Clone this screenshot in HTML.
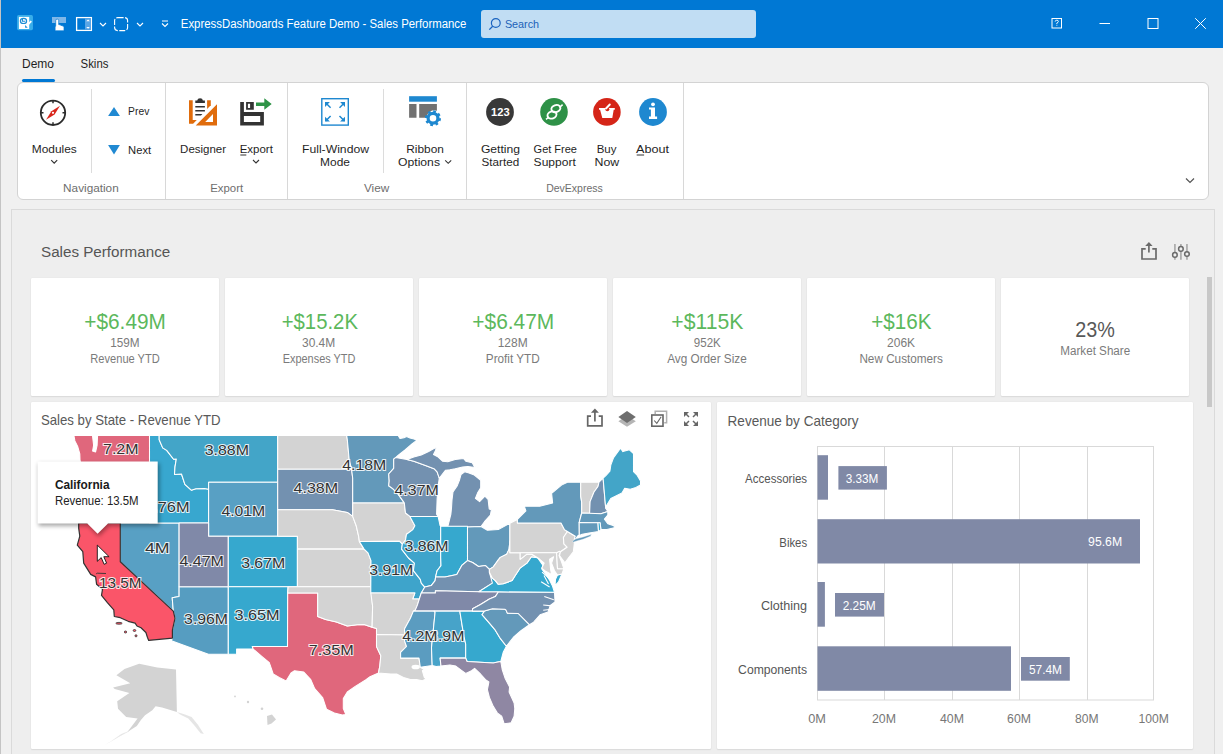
<!DOCTYPE html>
<html><head><meta charset="utf-8">
<style>
*{margin:0;padding:0;box-sizing:border-box}
html,body{width:1223px;height:754px;overflow:hidden;background:#f0f0f0;font-family:"Liberation Sans",sans-serif;position:relative}
.a{position:absolute;white-space:nowrap}
#title{left:0;top:0;width:1223px;height:48px;background:#0078d4}
#wborder{left:0;top:0;width:1px;height:754px;background:#c4c4c4}
.tt{color:#fff;font-size:12px}
#search{left:481px;top:10px;width:275px;height:28px;background:#c1ddf3;border-radius:3px}
.tab{font-size:12px;color:#1e1e1e}
#rib{left:17px;top:82px;width:1192px;height:118px;background:#fff;border:1px solid #d3d3d3;border-radius:6px}
.sep{background:#dcdcdc;width:1px}
.lbl{font-size:12px;color:#222;text-align:center;line-height:13px}
.glbl{font-size:12px;color:#707070}
#dash{left:11px;top:209px;width:1204px;height:560px;background:#eeeeee;border:1px solid #dadada}
.card{background:#fff;border-radius:1px;box-shadow:0 0 1px rgba(0,0,0,0.12),0 1px 1.5px rgba(0,0,0,0.08)}
.kv{font-size:20px;color:#5cb85c}
.ks{font-size:11.5px;color:#7a7a7a}

</style></head><body>
<div id="title" class="a"></div>
<div id="wborder" class="a"></div>
<!-- title bar icons -->
<svg class="a" style="left:0;top:0" width="480" height="48">
  <!-- app icon -->
  <rect x="17.05" y="15.05" width="15.9" height="15.1" rx="1.6" fill="#39aeea"/>
  <rect x="18.9" y="16.9" width="10.3" height="12.1" fill="#fff"/>
  <ellipse cx="23.5" cy="20.9" rx="3.1" ry="2.6" fill="none" stroke="#1b8ed6" stroke-width="1.2"/>
  <path d="M22.5 19v2.3h2.7" stroke="#1b8ed6" stroke-width="1.1" fill="none"/>
  <path d="M26 26.6L31.3 21.1" stroke="#fff" stroke-width="1.7"/>
  <path d="M25.1 25.1V27.7H27.7Z" fill="#1b8ed6"/>
  <!-- touch icon -->
  <rect x="52" y="17" width="14" height="6" fill="#7fb7e8"/>
  <path d="M55.7 26.2V20.6Q55.7 19.1 57.2 19.1Q58.7 19.1 58.7 20.6V24.6L60.2 24.8L61 25.5L62.2 25.5L62.9 26.2L64 26.3V30.8H55.1V26.8Z" fill="#fff" stroke="#0078d4" stroke-width="0.7"/>
  <!-- panel icon -->
  <rect x="76.6" y="17.6" width="14.8" height="12.8" fill="none" stroke="#fff" stroke-width="1.3"/>
  <rect x="85" y="18.2" width="6" height="11.6" fill="#5aa6e6"/>
  <path d="M86.2 21.2L88.1 19.5L89.9 21.2ZM86.2 27.1L88.1 28.8L89.9 27.1Z" fill="#fff"/>
  <path d="M100 23l3 3 3-3" stroke="#fff" stroke-width="1.1" fill="none"/>
  <!-- dashed rounded square -->
  <rect x="114.6" y="17.6" width="13" height="13" rx="3" fill="none" stroke="#fff" stroke-width="1.1" stroke-dasharray="6 1.5"/>
  <path d="M137 23l3 3 3-3" stroke="#fff" stroke-width="1.1" fill="none"/>
  <path d="M162 21h6" stroke="#fff" stroke-width="1"/>
  <path d="M162 23.5l3 3 3-3" stroke="#fff" stroke-width="1.1" fill="none"/>
</svg>
<div id="search" class="a"></div>
<svg class="a" style="left:486px;top:14px" width="20" height="20">
  <circle cx="9.8" cy="9" r="4.4" fill="none" stroke="#1a64c0" stroke-width="1.2"/>
  <path d="M6.7 12.2L3.3 15.6" stroke="#1a64c0" stroke-width="1.3"/>
</svg>
<svg class="a" style="left:1040px;top:10px" width="183" height="30">
  <rect x="12" y="8.5" width="9.5" height="9.5" fill="none" stroke="#fff" stroke-width="1"/>
  <path d="M15.2 11.6q0-1.4 1.6-1.4t1.6 1.3q0 .9-1.6 1.6v.9" fill="none" stroke="#fff" stroke-width="0.9"/>
  <rect x="16.4" y="14.8" width="0.9" height="0.9" fill="#fff"/>
  <path d="M59.5 13.5h10.5" stroke="#fff" stroke-width="1"/>
  <rect x="108" y="8.5" width="10" height="10" fill="none" stroke="#fff" stroke-width="1"/>
  <path d="M155.2 8.2l10.6 10.6M165.8 8.2l-10.6 10.6" stroke="#fff" stroke-width="1"/>
</svg>

<!-- tabs -->
<div class="a" style="left:22px;top:79px;width:33px;height:3px;background:#0078d4;border-radius:2px"></div>

<!-- ribbon -->
<div id="rib" class="a"></div>
<div class="a sep" style="left:165px;top:83px;height:116px;background:#d8d8d8"></div>
<div class="a sep" style="left:287px;top:83px;height:116px;background:#d8d8d8"></div>
<div class="a sep" style="left:466px;top:83px;height:116px;background:#d8d8d8"></div>
<div class="a sep" style="left:683px;top:83px;height:116px;background:#d8d8d8"></div>
<div class="a sep" style="left:91px;top:89px;height:84px"></div>
<div class="a sep" style="left:383px;top:89px;height:84px"></div>

<svg class="a" style="left:0;top:82px" width="1223" height="118" viewBox="0 82 1223 118">
  <!-- compass -->
  <g transform="translate(53,112.8)">
    <circle r="12.2" fill="none" stroke="#2b2b2b" stroke-width="1.8"/>
    <path d="M0-12v2.5M0 12v-2.5M-12 0h2.5M12 0h-2.5" stroke="#2b2b2b" stroke-width="1.5"/>
    <path d="M7-7L1.6 1.6-7 7-1.6-1.6z" fill="#d9261c"/>
    <circle r="1.1" fill="#fff"/>
  </g>
  <path d="M51.2 160.2l3 3 3-3" stroke="#333" stroke-width="1.2" fill="none"/>
  <!-- prev/next -->
  <path d="M108.1 115.9h11.8l-5.9-8.9z" fill="#2089d2"/>
  <path d="M108.1 145h11.8l-5.9 9.5z" fill="#2089d2"/>
  <!-- designer -->
  <path d="M189 100.2H192.7V120H196.8L193.1 123.7H189Z" fill="#e06c0c"/>
  <path d="M207.1 100.2H210.8V105.3L207.1 109Z" fill="#e06c0c"/>
  <path d="M217 104.2V125.5H195.7ZM213 114.1V121.9H205.2Z" fill="#e06c0c" fill-rule="evenodd"/>
  <path d="M195.3 103.1V100.4H197.2Q197.5 98.3 200.1 98.3Q202.6 98.3 202.9 100.4H204.9V103.1Z" fill="#333"/>
  <path d="M195.3 106H204.9V107.5H195.3ZM195.3 110.1H204.9V111.6H195.3ZM195.3 114.1H202.4L201 115.6H195.3Z" fill="#333"/>
  <!-- export floppy -->
  <path d="M240.2 102H243.9V111.9H263.9V125.5H240.2ZM243.9 116V121.9H260.2V116Z" fill="#333" fill-rule="evenodd"/>
  <path d="M246.1 102H253.8V109.7H246.1ZM247.9 103.8V107.9H250.1V103.8Z" fill="#333" fill-rule="evenodd"/>
  <path d="M256 102.4H264.3V98.3L271.7 104L264.3 109.7V105.9H256Z" fill="#2e9447"/>
  <path d="M253 160l3 3 3-3" stroke="#333" stroke-width="1.1" fill="none"/>
  <path d="M240.3 155h6" stroke="#333" stroke-width="1"/>
  <!-- full window -->
  <rect x="321.8" y="98.7" width="26.5" height="26.4" stroke="#1e88d0" stroke-width="1.4" fill="none"/>
  <g stroke="#1e88d0" stroke-width="1.5" fill="none">
    <path d="M325.6 102.7l5 5M344.5 102.7l-5 5M325.6 121l5-5M344.5 121l-5-5"/>
  </g>
  <g fill="#1e88d0">
    <path d="M325 102.1H329.9L325 107Z"/><path d="M345 102.1H340.1L345 107Z"/>
    <path d="M325 121.6H329.9L325 116.7Z"/><path d="M345 121.6H340.1L345 116.7Z"/>
  </g>
  <!-- ribbon options -->
  <rect x="409.1" y="96.2" width="27.8" height="5.5" fill="#1e88d0"/>
  <path d="M409.1 104.1h7.4v13.7h-7.4zM419.2 104.1h17.7v6.6a8.6 8.6 0 0 0-10.8 7.1H419.2z" fill="#717171"/>
  <g transform="translate(433,118.2)">
    <circle r="6.6" fill="none" stroke="#1e88d0" stroke-width="2.8" stroke-dasharray="2.6 2.58"/>
    <circle r="4.9" fill="none" stroke="#1e88d0" stroke-width="3.2"/>
  </g>
  <path d="M445.2 160.3l3 3 3-3" stroke="#333" stroke-width="1.1" fill="none"/>
  <!-- devexpress circles -->
  <circle cx="500" cy="112" r="13.9" fill="#383838"/>
  <text x="491" y="115.8" font-family="Liberation Sans" font-size="10.6" font-weight="bold" fill="#fff" textLength="18.6" lengthAdjust="spacingAndGlyphs">123</text>
  <circle cx="554" cy="111.9" r="13.8" fill="#2e9147"/>
  <g stroke="#fff" stroke-width="1.9" fill="none">
    <ellipse cx="555.9" cy="108.6" rx="4.6" ry="3.5" transform="rotate(-20 555.9 108.6)"/>
    <ellipse cx="552" cy="115" rx="4.6" ry="3.5" transform="rotate(-20 552 115)"/>
  </g>
  <path d="M562.6 104.7L559.5 107.5M546 119.4L549 117" stroke="#fff" stroke-width="1.6"/>
  <circle cx="606.9" cy="111.9" r="13.8" fill="#d52518"/>
  <path d="M599 108H614.8V109.8H613.7L612.3 117.9H602.3L600.1 109.8H599Z" fill="#fff"/>
  <circle cx="607.3" cy="109.3" r="2" fill="#d52518"/>
  <path d="M606 108.5L609.8 104.5" stroke="#fff" stroke-width="1.9" stroke-linecap="round"/>
  <circle cx="653" cy="112" r="13.9" fill="#1e88d0"/>
  <circle cx="653" cy="104.3" r="1.9" fill="#fff"/>
  <path d="M649 107.5H655V116.6H657.1V119H649V116.6H650.9V109.6H649Z" fill="#fff"/>
  <path d="M636.7 155h7.4" stroke="#333" stroke-width="1"/>
  <path d="M1186 178.5l4 4 4-4" stroke="#555" stroke-width="1.2" fill="none"/>
</svg>
<!-- dashboard -->
<div id="dash" class="a"></div>
<svg class="a" style="left:1130px;top:236px" width="70" height="30" viewBox="1130 236 70 30">
  <path d="M1145.7 248.9H1142V259H1156V248.9H1152.3" fill="none" stroke="#6a6a6a" stroke-width="1.7"/>
  <path d="M1148.9 252.6V245" stroke="#6a6a6a" stroke-width="1.7"/>
  <path d="M1148.9 242L1145.2 245.9H1152.6Z" fill="#6a6a6a"/>
  <path d="M1174.9 244V259.8M1180.9 244V259.8M1186.95 244V259.8" stroke="#ababab" stroke-width="1.7"/>
  <g fill="#efefef" stroke="#6a6a6a" stroke-width="1.5">
    <circle cx="1174.9" cy="254.9" r="2.3"/><circle cx="1180.9" cy="248.9" r="2.3"/><circle cx="1186.95" cy="254" r="2.3"/>
  </g>
</svg>
<div class="a" style="left:1207px;top:277px;width:5px;height:130px;background:#c8c8c8"></div>

<!-- KPI cards -->
<div class="a card" style="left:31px;top:278px;width:187.5px;height:118px"></div>
<div class="a card" style="left:225px;top:278px;width:187.5px;height:118px"></div>
<div class="a card" style="left:419px;top:278px;width:187.5px;height:118px"></div>
<div class="a card" style="left:613px;top:278px;width:187.5px;height:118px"></div>
<div class="a card" style="left:807px;top:278px;width:187.5px;height:118px"></div>
<div class="a card" style="left:1001px;top:278px;width:188px;height:118px"></div>

<div id="kpis"></div>

<!-- panels -->
<div class="a card" style="left:31px;top:402px;width:680px;height:347px"></div>
<div class="a card" style="left:717px;top:402px;width:476px;height:347px"></div>

<svg class="a" style="left:717px;top:402px" width="476" height="347" viewBox="717 402 476 347">
<g stroke="#d9d9d9" stroke-width="1" fill="none">
<path d="M884.5 446.5V700M952.5 446.5V700M1019.5 446.5V700M1087.5 446.5V700"/>
<rect x="817.5" y="446.5" width="336" height="253.5"/>
</g>
<g fill="#8089a6">
<rect x="817.5" y="455.2" width="10.5" height="44.5"/>
<rect x="838.4" y="466.1" width="48.5" height="23.5"/>
<rect x="817.5" y="519.2" width="322.5" height="44.3"/>
<rect x="817.5" y="582" width="7.4" height="44.7"/>
<rect x="835" y="593" width="49" height="23.6"/>
<rect x="817.5" y="646.3" width="193.5" height="44.5"/>
<rect x="1021" y="657" width="48.8" height="23.7"/>
</g>
</svg>
<svg class="a" style="left:31px;top:436px" width="680" height="312" viewBox="31 436 680 312">
<path d="M73.6 433.9L74.9 440.9L77.8 446.8L79.8 454.0L80.0 459.8L80.8 464.8L80.8 464.8L86.7 465.5L90.7 466.9L93.0 473.3L100.5 474.7L108.4 473.3L115.3 472.5L125.2 469.4L130.3 468.3L150.7 468.5L149.5 462.3L149.6 424.6L97.6 424.6L97.6 435.0L97.1 445.3L95.6 451.9L92.6 451.1L93.6 445.3L92.1 432.1L91.6 424.6L80.8 424.6Z" fill="#e0677c" stroke="#fff" stroke-width="1.05" stroke-linejoin="round"/>
<path d="M80.8 464.8L80.8 464.8L86.7 465.5L90.7 466.9L93.0 473.3L100.5 474.7L108.4 473.3L115.3 472.5L125.2 469.4L130.3 468.3L150.7 468.5L150.7 468.5L152.8 472.5L154.8 476.1L151.8 483.7L147.9 492.0L150.9 498.9L149.6 500.2L149.6 523.0L78.7 523.0L75.8 512.4L79.8 496.1L81.3 475.4Z" fill="#58a0c4" stroke="#fff" stroke-width="1.05" stroke-linejoin="round"/>
<path d="M120.3 523.0L179.1 523.0L179.1 596.6L172.2 597.8L173.3 611.1L120.3 561.8Z" fill="#58a0c4" stroke="#fff" stroke-width="1.05" stroke-linejoin="round"/>
<path d="M179.1 586.8L228.3 586.8L228.3 654.3L208.4 654.3L171.4 640.7L172.4 638.1L172.4 630.2L175.0 618.3L173.9 613.5L173.3 611.1L172.2 597.8L179.1 596.6Z" fill="#569dc1" stroke="#fff" stroke-width="1.05" stroke-linejoin="round"/>
<path d="M149.5 424.6L159.2 424.6L159.2 439.8L162.7 447.9L166.7 450.4L173.6 459.3L176.3 459.1L175.0 466.9L174.5 474.5L181.5 474.0L184.9 484.4L191.3 490.2L195.8 488.7L204.5 488.6L208.6 489.3L208.6 523.0L149.6 523.0L149.6 500.2L150.9 498.9L147.9 492.0L151.8 483.7L154.8 476.1L152.8 472.5L150.7 468.5L150.7 468.5L149.5 462.3Z" fill="#38a7cf" stroke="#fff" stroke-width="1.05" stroke-linejoin="round"/>
<path d="M159.2 424.6L277.7 424.6L277.7 482.3L208.6 482.3L208.6 489.3L204.5 488.6L195.8 488.7L191.3 490.2L184.9 484.4L181.5 474.0L174.5 474.5L175.0 466.9L176.3 459.1L173.6 459.3L166.7 450.4L162.7 447.9L159.2 439.8Z" fill="#43a5c8" stroke="#fff" stroke-width="1.05" stroke-linejoin="round"/>
<path d="M208.6 482.3L277.7 482.3L277.7 536.2L208.6 536.2Z" fill="#58a0c4" stroke="#fff" stroke-width="1.05" stroke-linejoin="round"/>
<path d="M179.1 523.0L208.6 523.0L208.6 536.2L228.3 536.2L228.3 586.8L179.1 586.8Z" fill="#8089a8" stroke="#fff" stroke-width="1.05" stroke-linejoin="round"/>
<path d="M228.3 536.2L297.4 536.2L297.4 586.8L228.3 586.8Z" fill="#36a8ce" stroke="#fff" stroke-width="1.05" stroke-linejoin="round"/>
<path d="M228.3 586.8L288.1 586.8L287.7 592.9L287.5 646.5L252.3 646.5L253.2 649.1L236.6 649.1L236.6 654.3L228.3 654.3Z" fill="#36a8ce" stroke="#fff" stroke-width="1.05" stroke-linejoin="round"/>
<path d="M287.7 592.9L317.7 592.9L317.7 616.4L325.6 619.5L336.4 621.9L347.3 626.0L357.1 624.8L364.1 624.5L372.1 627.3L376.5 628.4L376.5 646.6L380.8 655.8L379.8 666.1L378.5 672.9L370.0 676.8L366.0 679.6L355.2 686.4L347.3 692.0L343.3 698.6L343.3 708.6L345.8 714.5L342.3 715.1L334.4 712.9L326.5 709.1L322.6 697.5L314.7 688.6L310.8 679.6L303.8 672.1L294.5 670.8L291.0 672.9L286.1 681.0L279.2 677.4L273.2 674.0L269.3 662.6L262.4 656.9L253.2 649.1L252.3 646.5L287.5 646.5Z" fill="#e0677c" stroke="#fff" stroke-width="1.05" stroke-linejoin="round"/>
<path d="M277.7 424.6L345.0 424.6L347.3 439.5L349.2 459.8L351.6 469.2L277.7 469.2Z" fill="#d3d3d3" stroke="#fff" stroke-width="1.05" stroke-linejoin="round"/>
<path d="M277.7 469.2L351.6 469.2L352.7 478.2L352.7 502.9L352.7 516.4L347.3 512.4L332.5 509.7L277.7 509.7Z" fill="#7391b0" stroke="#fff" stroke-width="1.05" stroke-linejoin="round"/>
<path d="M277.7 509.7L332.5 509.7L347.3 512.4L352.7 516.4L356.2 525.7L358.6 536.2L359.4 541.6L364.1 549.1L297.4 549.1L297.4 536.2L277.7 536.2Z" fill="#d3d3d3" stroke="#fff" stroke-width="1.05" stroke-linejoin="round"/>
<path d="M297.4 549.1L364.1 549.1L368.0 552.9L371.0 560.6L370.8 586.8L297.4 586.8Z" fill="#d3d3d3" stroke="#fff" stroke-width="1.05" stroke-linejoin="round"/>
<path d="M288.1 586.8L370.8 586.8L372.6 606.3L372.1 627.3L372.1 627.3L364.1 624.5L357.1 624.8L347.3 626.0L336.4 621.9L325.6 619.5L317.7 616.4L317.7 592.9L287.7 592.9Z" fill="#d3d3d3" stroke="#fff" stroke-width="1.05" stroke-linejoin="round"/>
<path d="M345.0 424.6L365.5 424.6L397.2 434.0L400.0 438.5L404.0 437.8L406.5 436.6L410.0 438.0L414.0 439.0L417.0 440.2L412.0 444.0L405.0 450.0L398.0 455.5L395.6 457.6L393.7 459.1L393.7 468.3L388.7 474.0L389.2 481.0L388.7 485.8L392.7 488.6L397.6 493.4L404.3 502.9L352.7 502.9L352.7 478.2L351.6 469.2L349.2 459.8L347.3 439.5Z" fill="#6399ba" stroke="#fff" stroke-width="1.05" stroke-linejoin="round"/>
<path d="M352.7 502.9L404.3 502.9L405.5 513.0L409.9 516.4L414.9 525.7L412.9 529.6L406.5 534.2L405.5 540.1L402.3 544.2L399.3 541.2L359.4 541.6L358.6 536.2L356.2 525.7L352.7 516.4Z" fill="#d3d3d3" stroke="#fff" stroke-width="1.05" stroke-linejoin="round"/>
<path d="M359.4 541.6L399.3 541.2L402.3 544.2L401.6 549.1L408.5 558.0L414.4 563.1L413.4 570.7L420.3 579.4L421.3 583.1L424.8 587.1L421.3 592.9L419.3 599.0L412.7 599.0L414.9 592.9L370.8 592.9L370.8 586.8L371.0 560.6L368.0 552.9L364.1 549.1Z" fill="#3ea4cb" stroke="#fff" stroke-width="1.05" stroke-linejoin="round"/>
<path d="M370.8 592.9L414.9 592.9L412.7 599.0L419.3 599.0L417.4 605.1L415.4 609.9L413.4 611.1L410.4 618.3L404.5 629.0L404.9 634.9L376.5 634.6L376.5 628.4L372.1 627.3L372.6 606.3Z" fill="#d3d3d3" stroke="#fff" stroke-width="1.05" stroke-linejoin="round"/>
<path d="M376.5 634.6L404.9 634.9L404.5 640.7L406.5 646.5L400.6 652.3L400.6 658.1L419.0 658.1L420.3 667.2L424.3 669.5L422.3 670.6L424.3 677.4L426.2 679.1L422.3 680.8L416.4 679.6L410.4 679.6L403.5 677.4L396.6 674.0L390.7 674.0L378.5 672.9L379.8 666.1L380.8 655.8L376.5 646.6Z" fill="#d3d3d3" stroke="#fff" stroke-width="1.05" stroke-linejoin="round"/>
<path d="M409.9 516.4L438.1 516.5L436.6 514.3L437.1 499.4L438.2 485.6L439.3 478.2L437.1 471.8L434.0 468.7L425.5 465.5L413.8 461.2L406.9 459.6L395.6 457.6L393.7 459.1L393.7 468.3L388.7 474.0L389.2 481.0L388.7 485.8L392.7 488.6L397.6 493.4L404.3 502.9L405.5 513.0Z" fill="#7391b0" stroke="#fff" stroke-width="1.05" stroke-linejoin="round"/>
<path d="M447.9 526.2L467.5 527.0L481.0 526.6L484.5 521.7L490.4 515.1L491.4 509.7L489.2 509.0L488.1 499.4L484.9 496.2L479.6 501.6L475.4 498.4L477.5 493.1L480.7 487.8L480.7 480.3L474.3 475.0L469.0 472.9L464.7 471.8L461.0 474.5L459.4 480.3L457.3 485.6L453.0 492.0L452.0 500.0L451.5 508.0L450.9 514.0Z" fill="#7391b0" stroke="#fff" stroke-width="1.05" stroke-linejoin="round"/>
<path d="M406.9 459.6L413.8 457.0L421.2 454.9L428.7 451.5L433.0 449.0L436.5 447.2L435.5 450.5L433.5 454.5L438.2 457.0L442.5 461.2L447.8 461.8L455.2 459.6L463.7 458.6L465.8 461.2L472.2 462.8L474.3 466.5L478.5 468.1L467.9 466.5L462.6 467.0L455.2 468.7L449.9 469.7L445.6 470.2L442.5 474.0L439.3 478.2L437.1 471.8L434.0 468.7L425.5 465.5L413.8 461.2Z" fill="#7391b0" stroke="#fff" stroke-width="1.05" stroke-linejoin="round"/>
<path d="M409.9 516.4L438.1 516.5L440.1 525.7L440.7 526.2L440.7 557.4L441.0 565.6L437.1 570.7L435.6 576.9L435.1 580.6L431.2 585.6L424.8 587.1L421.3 583.1L420.3 579.4L413.4 570.7L414.4 563.1L408.5 558.0L401.6 549.1L402.3 544.2L405.5 540.1L406.5 534.2L412.9 529.6L414.9 525.7L409.9 516.4Z" fill="#3ea4cb" stroke="#fff" stroke-width="1.05" stroke-linejoin="round"/>
<path d="M440.7 526.2L447.9 526.2L467.5 526.2L467.5 560.6L461.8 565.4L456.8 574.4L450.9 575.7L445.0 576.9L435.6 576.9L437.1 570.7L441.0 565.6L440.7 557.4Z" fill="#36a8ce" stroke="#fff" stroke-width="1.05" stroke-linejoin="round"/>
<path d="M467.5 527.0L481.0 526.6L487.4 530.3L498.3 529.6L509.9 523.3L509.9 540.8L509.1 549.1L506.7 554.2L500.3 557.4L497.3 561.2L493.3 566.9L489.4 569.4L485.5 565.6L478.5 566.5L472.6 562.5L467.5 560.6Z" fill="#6399ba" stroke="#fff" stroke-width="1.05" stroke-linejoin="round"/>
<path d="M421.3 592.9L435.4 592.9L435.4 590.7L478.8 591.7L492.4 583.1L498.3 584.3L495.3 580.6L492.4 578.2L489.4 572.3L489.4 569.4L485.5 565.6L478.5 566.5L472.6 562.5L467.5 560.6L461.8 565.4L456.8 574.4L450.9 575.7L445.0 576.9L435.6 576.9L435.1 580.6L431.2 585.6L424.8 587.1Z" fill="#7391b0" stroke="#fff" stroke-width="1.05" stroke-linejoin="round"/>
<path d="M413.4 611.1L434.1 611.1L459.8 611.1L472.4 611.1L472.6 608.7L480.5 604.5L489.4 599.0L495.3 596.6L498.5 591.8L478.8 591.7L435.4 590.7L435.4 592.9L421.3 592.9L419.3 599.0L417.4 605.1L415.4 609.9Z" fill="#8089a8" stroke="#fff" stroke-width="1.05" stroke-linejoin="round"/>
<path d="M413.4 611.1L434.1 611.1L435.1 612.3L431.5 647.7L432.2 665.5L420.3 667.2L419.0 658.1L400.6 658.1L400.6 652.3L406.5 646.5L404.5 640.7L404.9 634.9L404.5 629.0L410.4 618.3Z" fill="#5b9cc0" stroke="#fff" stroke-width="1.05" stroke-linejoin="round"/>
<path d="M434.1 611.1L459.8 611.1L463.9 636.4L465.7 644.2L465.7 658.1L440.1 658.1L441.0 666.1L436.1 666.6L432.2 665.5L431.5 647.7L435.1 612.3Z" fill="#47a3c9" stroke="#fff" stroke-width="1.05" stroke-linejoin="round"/>
<path d="M459.8 611.1L484.4 611.1L482.0 614.7L489.4 623.1L495.3 630.2L500.3 638.4L506.4 646.2L503.2 652.3L500.8 661.5L495.3 662.6L493.3 663.0L467.1 661.5L465.7 658.1L465.7 644.2L463.9 636.4Z" fill="#36a8ce" stroke="#fff" stroke-width="1.05" stroke-linejoin="round"/>
<path d="M440.1 658.1L465.7 658.1L467.1 661.5L493.3 663.0L495.3 662.6L500.8 661.5L502.2 669.5L505.2 678.5L509.6 686.9L509.1 692.0L514.1 703.0L514.8 708.6L514.1 716.2L511.1 722.8L504.2 723.8L501.7 716.2L497.3 712.9L493.3 706.4L489.4 697.5L487.4 689.7L488.9 681.9L485.5 679.6L480.5 674.0L474.6 668.3L471.6 670.6L465.7 673.4L461.8 670.6L455.8 666.1L449.9 664.9L441.0 666.1Z" fill="#8f87a3" stroke="#fff" stroke-width="1.05" stroke-linejoin="round"/>
<path d="M484.4 611.1L482.0 614.7L489.4 623.1L495.3 630.2L500.3 638.4L506.4 646.2L513.2 637.5L520.6 631.0L529.4 624.7L518.3 613.5L507.4 613.3L505.9 609.9L504.8 609.3L492.4 608.8Z" fill="#6399ba" stroke="#fff" stroke-width="1.05" stroke-linejoin="round"/>
<path d="M472.4 611.1L484.4 611.1L492.4 608.8L504.8 609.3L505.9 609.9L507.4 613.3L518.3 613.5L529.4 624.7L533.6 622.2L540.1 614.8L548.0 612.0L550.3 605.5L555.0 601.8L554.5 592.3L498.5 591.8L495.3 596.6L489.4 599.0L480.5 604.5L472.6 608.7Z" fill="#7391b0" stroke="#fff" stroke-width="1.05" stroke-linejoin="round"/>
<path d="M478.8 591.7L498.5 591.8L554.5 592.3L552.5 586.0L549.8 580.5L546.5 575.5L541.8 569.0L542.8 565.3L537.6 557.8L531.4 556.8L526.9 563.1L520.0 568.2L515.1 575.7L512.1 580.6L503.2 583.7L498.3 584.3L495.3 580.6L492.4 578.2L489.4 572.3L492.4 583.1Z" fill="#36a8ce" stroke="#fff" stroke-width="1.05" stroke-linejoin="round"/>
<path d="M557.5 575.0L561.9 574.0L558.5 581.9L555.0 585.6L555.5 579.4Z" fill="#36a8ce" stroke="#fff" stroke-width="1.05" stroke-linejoin="round"/>
<path d="M489.4 572.3L492.4 578.2L495.3 580.6L498.3 584.3L503.2 583.7L512.1 580.6L515.1 575.7L520.0 568.2L526.9 563.1L531.4 556.8L537.6 557.8L531.8 554.2L526.9 554.2L520.2 559.3L520.2 552.7L509.9 552.7L509.9 540.8L509.1 549.1L506.7 554.2L500.3 557.4L497.3 561.2L493.3 566.9L489.4 569.4Z" fill="#d3d3d3" stroke="#fff" stroke-width="1.05" stroke-linejoin="round"/>
<path d="M509.9 523.3L517.4 519.5L517.4 523.0L561.0 523.0L564.4 529.6L567.4 531.5L563.4 537.5L563.9 543.9L567.1 547.2L560.5 551.7L556.6 552.7L509.9 552.7Z" fill="#d3d3d3" stroke="#fff" stroke-width="1.05" stroke-linejoin="round"/>
<path d="M520.2 552.7L556.6 552.7L557.5 568.7L563.9 568.8L561.9 574.0L557.5 575.0L554.5 570.7L551.6 563.1L553.6 556.8L549.6 559.3L550.6 569.4L551.6 574.4L544.7 570.7L541.7 568.2L544.2 563.1L539.7 559.3L537.6 557.8L531.8 554.2L526.9 554.2L520.2 559.3Z" fill="#d3d3d3" stroke="#fff" stroke-width="1.05" stroke-linejoin="round"/>
<path d="M556.6 552.7L559.5 551.3L560.5 551.7L559.0 555.5L561.5 561.8L563.9 568.8L557.5 568.7Z" fill="#d3d3d3" stroke="#fff" stroke-width="1.05" stroke-linejoin="round"/>
<path d="M567.4 531.5L575.3 536.3L574.3 540.1L574.3 543.9L573.3 551.7L568.4 558.0L564.9 562.7L559.5 555.5L560.5 551.7L567.1 547.2L563.9 543.9L563.4 537.5Z" fill="#d3d3d3" stroke="#fff" stroke-width="1.05" stroke-linejoin="round"/>
<path d="M517.4 523.0L517.4 519.5L525.9 511.0L524.4 506.3L539.7 506.3L552.6 502.9L551.6 493.4L561.5 485.1L567.4 482.3L580.7 482.3L580.7 496.1L581.7 502.3L581.7 513.0L579.2 522.4L579.3 534.9L577.2 536.8L574.8 539.8L574.1 541.1L574.5 538.1L575.3 536.3L567.4 531.5L564.4 529.6L561.0 523.0Z" fill="#6399ba" stroke="#fff" stroke-width="1.05" stroke-linejoin="round"/>
<path d="M572.5 541.0L576.0 538.8L583.0 537.0L591.5 534.3L590.5 536.2L583.0 539.3L576.0 541.2L573.0 542.3Z" fill="#6399ba" stroke="#fff" stroke-width="0.4" stroke-linejoin="round"/>
<path d="M580.7 482.3L599.0 482.2L598.0 486.5L594.0 492.0L590.1 501.6L589.6 513.3L581.7 513.0L581.7 502.3L580.7 496.1Z" fill="#d3d3d3" stroke="#fff" stroke-width="1.05" stroke-linejoin="round"/>
<path d="M599.0 482.2L603.1 478.2L605.7 508.1L607.8 511.4L600.9 513.7L589.6 513.3L590.1 501.6L594.0 492.0L598.0 486.5Z" fill="#7391b0" stroke="#fff" stroke-width="1.05" stroke-linejoin="round"/>
<path d="M603.1 478.2L606.1 475.3L609.9 471.1L610.8 465.1L613.6 457.6L620.5 448.2L622.9 451.6L629.4 449.8L633.5 453.5L633.5 471.6L636.8 474.8L640.5 480.9L640.5 485.0L635.9 487.4L630.3 489.2L624.7 488.3L621.9 492.9L616.4 495.7L610.8 498.5L605.9 506.5L605.7 508.1Z" fill="#43a5c8" stroke="#fff" stroke-width="1.05" stroke-linejoin="round"/>
<path d="M579.2 522.4L581.7 513.0L589.6 513.3L600.9 513.7L607.8 511.4L607.8 515.1L604.4 519.1L607.8 523.7L613.8 525.7L613.8 522.4L614.3 527.7L606.9 529.6L600.9 529.6L600.1 522.8L598.0 522.8Z" fill="#6399ba" stroke="#fff" stroke-width="1.05" stroke-linejoin="round"/>
<path d="M579.2 522.4L598.0 522.8L598.5 531.6L589.1 532.9L582.2 534.2L577.2 536.4L579.3 534.9Z" fill="#6399ba" stroke="#fff" stroke-width="1.05" stroke-linejoin="round"/>
<path d="M598.0 522.8L600.1 522.8L600.9 529.6L598.5 531.6Z" fill="#36a8ce" stroke="#fff" stroke-width="1.05" stroke-linejoin="round"/>
<path d="M78.7 523.0L120.3 523.0L120.3 561.8L173.3 611.1L173.9 613.5L175.0 618.3L172.4 630.2L172.4 638.1L148.7 640.4L147.4 637.2L145.9 632.5L141.0 627.8L137.0 626.0L135.1 623.1L128.2 621.3L120.3 617.7L114.3 616.5L113.8 609.9L107.4 602.7L101.5 595.4L102.5 589.3L96.6 584.3L95.6 576.9L90.7 574.4L83.7 563.1L82.8 551.7L77.3 545.2L79.8 536.2L78.7 528.3Z" fill="#fa5569" stroke="#333" stroke-width="1.2" stroke-linejoin="round"/>
<path d="M116.4 675.2L124.5 669.1L139.2 663.7L157.2 667.5L176 669.4L176.9 712L168.7 709.5L162.1 707.4L155.6 706.2L152.3 710.3L145 715.2L140.9 720.1L136.8 725.9L129.4 730.8L127 732.5L132.7 725L137.6 718.5L126.2 716.9L118 708.7L117.2 701.3L129.4 693.1L114.7 689.1L113.1 687.4L130.3 683.3Z" fill="#d3d3d3"/>
<path d="M127 732.5L119.6 736.5L109.8 742.2L104.9 744.7L110.6 741.4L121.3 734L129.4 730.8Z" fill="#d3d3d3" opacity="0.55"/>
<path d="M176.9 712L185 714.4L191.6 716.9L198.1 725L203.8 734L200.6 733.2L194 725L188.3 718.5L180.1 714.4Z" fill="#d3d3d3" opacity="0.6"/>
<path d="M267 716l5-1.5 4 5-4.5 4-4 1.5z" fill="#d3d3d3"/>
<circle cx="262" cy="708.7" r="1.3" fill="#d3d3d3"/><circle cx="248" cy="702" r="1.2" fill="#d3d3d3"/><circle cx="235" cy="696.4" r="0.9" fill="#d3d3d3"/>
<ellipse cx="415.7" cy="667" rx="4.2" ry="2.3" fill="#fff"/>
<path d="M96.2 573.8L97.3 573.2L106 573.5" stroke="#333" stroke-width="0.9" fill="none"/>
<path d="M542.1 572.1L550.6 579.6M541.1 581.7L549.6 587M544 575.5L548.5 584M544.3 596.5L553.8 599.7M543.2 605L553.8 606.1M543.2 610.3L551.7 609.3" stroke="#fff" stroke-width="1.1"/>
<ellipse cx="119" cy="623.3" rx="3.2" ry="0.9" fill="#fa5569" stroke="#333" stroke-width="0.8"/>
<ellipse cx="125.5" cy="632" rx="1.2" ry="1" fill="#fa5569" stroke="#333" stroke-width="0.8"/>
<ellipse cx="134.5" cy="630.5" rx="1.3" ry="1" fill="#fa5569" stroke="#333" stroke-width="0.8"/>
<ellipse cx="136" cy="635.8" rx="1" ry="1.1" fill="#fa5569" stroke="#333" stroke-width="0.8"/><text x="103.1" y="454.3" font-size="15.4" fill="#333" stroke="#fff" stroke-width="2.0" stroke-opacity="0.85" paint-order="stroke" textLength="35.4" lengthAdjust="spacingAndGlyphs">7.2M</text>
<text x="204.7" y="455.1" font-size="15.4" fill="#333" stroke="#fff" stroke-width="2.0" stroke-opacity="0.85" paint-order="stroke" textLength="44.2" lengthAdjust="spacingAndGlyphs">3.88M</text>
<text x="342.3" y="470.3" font-size="15.4" fill="#333" stroke="#fff" stroke-width="2.0" stroke-opacity="0.85" paint-order="stroke" textLength="44.0" lengthAdjust="spacingAndGlyphs">4.18M</text>
<text x="144.1" y="511.7" font-size="15.4" fill="#333" stroke="#fff" stroke-width="2.0" stroke-opacity="0.85" paint-order="stroke" textLength="45.5" lengthAdjust="spacingAndGlyphs">3.76M</text>
<text x="293.6" y="493.4" font-size="15.4" fill="#333" stroke="#fff" stroke-width="2.0" stroke-opacity="0.85" paint-order="stroke" textLength="44.5" lengthAdjust="spacingAndGlyphs">4.38M</text>
<text x="221.4" y="515.5" font-size="15.4" fill="#333" stroke="#fff" stroke-width="2.0" stroke-opacity="0.85" paint-order="stroke" textLength="43.7" lengthAdjust="spacingAndGlyphs">4.01M</text>
<text x="144.9" y="552.8" font-size="15.4" fill="#333" stroke="#fff" stroke-width="2.0" stroke-opacity="0.85" paint-order="stroke" textLength="24.6" lengthAdjust="spacingAndGlyphs">4M</text>
<text x="179.4" y="566.1" font-size="15.4" fill="#333" stroke="#fff" stroke-width="2.0" stroke-opacity="0.85" paint-order="stroke" textLength="44.5" lengthAdjust="spacingAndGlyphs">4.47M</text>
<text x="241.2" y="568.2" font-size="15.4" fill="#333" stroke="#fff" stroke-width="2.0" stroke-opacity="0.85" paint-order="stroke" textLength="43.9" lengthAdjust="spacingAndGlyphs">3.67M</text>
<text x="99.1" y="588.4" font-size="15.4" fill="#333" stroke="#fff" stroke-width="2.0" stroke-opacity="0.85" paint-order="stroke" textLength="42.5" lengthAdjust="spacingAndGlyphs">13.5M</text>
<text x="394.5" y="494.6" font-size="15.4" fill="#333" stroke="#fff" stroke-width="2.0" stroke-opacity="0.85" paint-order="stroke" textLength="44.3" lengthAdjust="spacingAndGlyphs">4.37M</text>
<text x="404.5" y="550.5" font-size="15.4" fill="#333" stroke="#fff" stroke-width="2.0" stroke-opacity="0.85" paint-order="stroke" textLength="44.0" lengthAdjust="spacingAndGlyphs">3.86M</text>
<text x="369.2" y="575.0" font-size="15.4" fill="#333" stroke="#fff" stroke-width="2.0" stroke-opacity="0.85" paint-order="stroke" textLength="44.0" lengthAdjust="spacingAndGlyphs">3.91M</text>
<text x="184.1" y="624.2" font-size="15.4" fill="#333" stroke="#fff" stroke-width="2.0" stroke-opacity="0.85" paint-order="stroke" textLength="43.9" lengthAdjust="spacingAndGlyphs">3.96M</text>
<text x="234.4" y="620.2" font-size="15.4" fill="#333" stroke="#fff" stroke-width="2.0" stroke-opacity="0.85" paint-order="stroke" textLength="45.1" lengthAdjust="spacingAndGlyphs">3.65M</text>
<text x="308.8" y="654.5" font-size="15.4" fill="#333" stroke="#fff" stroke-width="2.0" stroke-opacity="0.85" paint-order="stroke" textLength="45.1" lengthAdjust="spacingAndGlyphs">7.35M</text>
<text x="429.1" y="641.4" font-size="15.4" fill="#333" stroke="#fff" stroke-width="2.0" stroke-opacity="0.85" paint-order="stroke" textLength="35.3" lengthAdjust="spacingAndGlyphs">3.9M</text>
<text x="402.2" y="641.4" font-size="15.4" fill="#333" stroke="#fff" stroke-width="2.0" stroke-opacity="0.85" paint-order="stroke" textLength="35.3" lengthAdjust="spacingAndGlyphs">4.2M</text>
</svg>
<svg class="a" style="left:580px;top:402px" width="130" height="32" viewBox="580 402 130 32">
<g stroke="#666" stroke-width="1.7" fill="none">
<path d="M591 416.2H587.7V425.9H602V416.2H598.7"/>
<path d="M594.9 421.5V410"/>
</g>
<path d="M594.9 408.6L590.9 412.8H598.9Z" fill="#666"/>
<path d="M618.4 421.2L627 426.8L635.8 421.2L627 415.6Z" fill="#b5b5b5"/>
<path d="M618.4 417L627 411L635.8 417L627 423Z" fill="#6e6e6e"/>
<path d="M655.2 414.1V411.2H666.6V422.8H664.2" stroke="#b0b0b0" stroke-width="1.5" fill="none"/>
<rect x="651.8" y="415" width="11.2" height="11.2" stroke="#666" stroke-width="1.6" fill="none"/>
<path d="M654.2 420.5L656.8 423.3L661.2 416.8" stroke="#666" stroke-width="1.1" fill="none"/>
<g stroke="#666" stroke-width="1.5" fill="none">
<path d="M685 413L689 417M697 413L693 417M685 425L689 421M697 425L693 421"/>
</g>
<g fill="#666">
<path d="M684 412H689L684 417Z"/><path d="M698 412H693L698 417Z"/><path d="M684 426H689L684 421Z"/><path d="M698 426H693L698 421Z"/>
</g>
</svg>
<svg class="a" style="left:20px;top:450px" width="160" height="130" viewBox="20 450 160 130">
<defs><filter id="sh" x="-20%" y="-20%" width="140%" height="150%"><feGaussianBlur stdDeviation="2.2"/></filter></defs>
<path d="M38.5 463.5H159.5V526H109.5L98.5 536.5L88.5 526H38.5Z" fill="#000" opacity="0.35" filter="url(#sh)"/>
<path d="M37.6 461.5H157.7V523.5H108L97.6 533.8L87.3 523.5H37.6Z" fill="#fff"/>
<path d="M97.3 545.1V561.3L101.2 557.6L104.1 564.3L106.6 563.2L103.8 556.7H109.1Z" fill="#fff" stroke="#111" stroke-width="0.9" stroke-linejoin="miter"/>
</svg>
<svg class="a" style="left:0;top:0" width="1223" height="754" font-family="Liberation Sans, sans-serif">
<text x="180.8" y="28.3" font-size="12.5" fill="#fff" font-weight="normal" textLength="285.6" lengthAdjust="spacingAndGlyphs">ExpressDashboards Feature Demo - Sales Performance</text>
<text x="504.9" y="27.9" font-size="11.6" fill="#1c62b8" font-weight="normal" textLength="34.2" lengthAdjust="spacingAndGlyphs">Search</text>
<text x="22.0" y="67.8" font-size="12.8" fill="#1f1f1f" font-weight="normal" textLength="32.0" lengthAdjust="spacingAndGlyphs">Demo</text>
<text x="80.6" y="67.8" font-size="12.8" fill="#1f1f1f" font-weight="normal" textLength="27.8" lengthAdjust="spacingAndGlyphs">Skins</text>
<text x="31.8" y="152.7" font-size="10.8" fill="#1f1f1f" font-weight="normal" textLength="45.0" lengthAdjust="spacingAndGlyphs">Modules</text>
<text x="128.1" y="114.9" font-size="10.8" fill="#1f1f1f" font-weight="normal" textLength="21.2" lengthAdjust="spacingAndGlyphs">Prev</text>
<text x="128.1" y="153.5" font-size="10.8" fill="#1f1f1f" font-weight="normal" textLength="23.0" lengthAdjust="spacingAndGlyphs">Next</text>
<text x="180.1" y="152.8" font-size="10.8" fill="#1f1f1f" font-weight="normal" textLength="46.0" lengthAdjust="spacingAndGlyphs">Designer</text>
<text x="239.7" y="152.8" font-size="10.8" fill="#1f1f1f" font-weight="normal" textLength="33.2" lengthAdjust="spacingAndGlyphs">Export</text>
<text x="302.0" y="152.6" font-size="10.8" fill="#1f1f1f" font-weight="normal" textLength="67.0" lengthAdjust="spacingAndGlyphs">Full-Window</text>
<text x="320.1" y="165.5" font-size="10.8" fill="#1f1f1f" font-weight="normal" textLength="29.8" lengthAdjust="spacingAndGlyphs">Mode</text>
<text x="406.3" y="152.6" font-size="10.8" fill="#1f1f1f" font-weight="normal" textLength="37.6" lengthAdjust="spacingAndGlyphs">Ribbon</text>
<text x="398.0" y="165.5" font-size="10.8" fill="#1f1f1f" font-weight="normal" textLength="42.0" lengthAdjust="spacingAndGlyphs">Options</text>
<text x="480.9" y="153.1" font-size="10.8" fill="#1f1f1f" font-weight="normal" textLength="39.1" lengthAdjust="spacingAndGlyphs">Getting</text>
<text x="481.6" y="165.8" font-size="10.8" fill="#1f1f1f" font-weight="normal" textLength="37.6" lengthAdjust="spacingAndGlyphs">Started</text>
<text x="533.6" y="153.1" font-size="10.8" fill="#1f1f1f" font-weight="normal" textLength="43.4" lengthAdjust="spacingAndGlyphs">Get Free</text>
<text x="533.6" y="165.8" font-size="10.8" fill="#1f1f1f" font-weight="normal" textLength="42.2" lengthAdjust="spacingAndGlyphs">Support</text>
<text x="596.7" y="153.1" font-size="10.8" fill="#1f1f1f" font-weight="normal" textLength="19.8" lengthAdjust="spacingAndGlyphs">Buy</text>
<text x="594.6" y="165.8" font-size="10.8" fill="#1f1f1f" font-weight="normal" textLength="24.7" lengthAdjust="spacingAndGlyphs">Now</text>
<text x="636.1" y="153.1" font-size="10.8" fill="#1f1f1f" font-weight="normal" textLength="33.0" lengthAdjust="spacingAndGlyphs">About</text>
<text x="63.1" y="191.7" font-size="10.8" fill="#6e6e6e" font-weight="normal" textLength="55.6" lengthAdjust="spacingAndGlyphs">Navigation</text>
<text x="210.2" y="191.7" font-size="10.8" fill="#6e6e6e" font-weight="normal" textLength="33.0" lengthAdjust="spacingAndGlyphs">Export</text>
<text x="363.9" y="191.5" font-size="10.8" fill="#6e6e6e" font-weight="normal" textLength="25.3" lengthAdjust="spacingAndGlyphs">View</text>
<text x="546.2" y="191.6" font-size="10.8" fill="#6e6e6e" font-weight="normal" textLength="56.6" lengthAdjust="spacingAndGlyphs">DevExpress</text>
<text x="41.0" y="256.6" font-size="15.5" fill="#555" font-weight="normal" textLength="129.2" lengthAdjust="spacingAndGlyphs">Sales Performance</text>
<text x="84.3" y="329" font-size="21.2" fill="#5cb85c" font-weight="normal" textLength="81.6" lengthAdjust="spacingAndGlyphs">+$6.49M</text>
<text x="110.2" y="346.6" font-size="12.2" fill="#7b7b7b" font-weight="normal" textLength="29.4" lengthAdjust="spacingAndGlyphs">159M</text>
<text x="90.3" y="362.7" font-size="12.2" fill="#7b7b7b" font-weight="normal" textLength="69.5" lengthAdjust="spacingAndGlyphs">Revenue YTD</text>
<text x="281.7" y="329" font-size="21.2" fill="#5cb85c" font-weight="normal" textLength="76.3" lengthAdjust="spacingAndGlyphs">+$15.2K</text>
<text x="302.0" y="346.6" font-size="12.2" fill="#7b7b7b" font-weight="normal" textLength="33.2" lengthAdjust="spacingAndGlyphs">30.4M</text>
<text x="282.7" y="362.7" font-size="12.2" fill="#7b7b7b" font-weight="normal" textLength="72.7" lengthAdjust="spacingAndGlyphs">Expenses YTD</text>
<text x="472.3" y="329" font-size="21.2" fill="#5cb85c" font-weight="normal" textLength="82.0" lengthAdjust="spacingAndGlyphs">+$6.47M</text>
<text x="497.7" y="346.6" font-size="12.2" fill="#7b7b7b" font-weight="normal" textLength="30.0" lengthAdjust="spacingAndGlyphs">128M</text>
<text x="485.8" y="362.7" font-size="12.2" fill="#7b7b7b" font-weight="normal" textLength="54.0" lengthAdjust="spacingAndGlyphs">Profit YTD</text>
<text x="671.3" y="329" font-size="21.2" fill="#5cb85c" font-weight="normal" textLength="72.0" lengthAdjust="spacingAndGlyphs">+$115K</text>
<text x="693.8" y="346.6" font-size="12.2" fill="#7b7b7b" font-weight="normal" textLength="27.0" lengthAdjust="spacingAndGlyphs">952K</text>
<text x="667.2" y="362.7" font-size="12.2" fill="#7b7b7b" font-weight="normal" textLength="79.5" lengthAdjust="spacingAndGlyphs">Avg Order Size</text>
<text x="871.2" y="329" font-size="21.2" fill="#5cb85c" font-weight="normal" textLength="60.3" lengthAdjust="spacingAndGlyphs">+$16K</text>
<text x="887.1" y="346.6" font-size="12.2" fill="#7b7b7b" font-weight="normal" textLength="28.0" lengthAdjust="spacingAndGlyphs">206K</text>
<text x="859.4" y="362.7" font-size="12.2" fill="#7b7b7b" font-weight="normal" textLength="83.5" lengthAdjust="spacingAndGlyphs">New Customers</text>
<text x="1075.2" y="336.9" font-size="22" fill="#585858" font-weight="normal" textLength="39.6" lengthAdjust="spacingAndGlyphs">23%</text>
<text x="1060.3" y="354.9" font-size="12.5" fill="#7b7b7b" font-weight="normal" textLength="69.9" lengthAdjust="spacingAndGlyphs">Market Share</text>
<text x="54.9" y="488.7" font-size="12.3" fill="#1a1a1a" font-weight="bold" textLength="54.6" lengthAdjust="spacingAndGlyphs">California</text>
<text x="54.9" y="504.6" font-size="12.3" fill="#222" font-weight="normal" textLength="83.7" lengthAdjust="spacingAndGlyphs">Revenue: 13.5M</text>
<text x="40.9" y="425.0" font-size="14.8" fill="#595959" font-weight="normal" textLength="179.7" lengthAdjust="spacingAndGlyphs">Sales by State - Revenue YTD</text>
<text x="727.6" y="425.5" font-size="14.8" fill="#595959" font-weight="normal" textLength="131.0" lengthAdjust="spacingAndGlyphs">Revenue by Category</text>
<text x="745.1" y="482.8" font-size="13.2" fill="#555" font-weight="normal" textLength="62.0" lengthAdjust="spacingAndGlyphs">Accessories</text>
<text x="779.3" y="546.5" font-size="13.2" fill="#555" font-weight="normal" textLength="27.8" lengthAdjust="spacingAndGlyphs">Bikes</text>
<text x="761.0" y="609.9" font-size="13.2" fill="#555" font-weight="normal" textLength="46.1" lengthAdjust="spacingAndGlyphs">Clothing</text>
<text x="738.1" y="673.9" font-size="13.2" fill="#555" font-weight="normal" textLength="69.0" lengthAdjust="spacingAndGlyphs">Components</text>
<text x="845.7" y="482.8" font-size="13.2" fill="#fff" font-weight="normal" textLength="32.7" lengthAdjust="spacingAndGlyphs">3.33M</text>
<text x="1088.1" y="545.8" font-size="13.2" fill="#fff" font-weight="normal" textLength="34.0" lengthAdjust="spacingAndGlyphs">95.6M</text>
<text x="842.7" y="609.9" font-size="13.2" fill="#fff" font-weight="normal" textLength="33.0" lengthAdjust="spacingAndGlyphs">2.25M</text>
<text x="1029.0" y="673.5" font-size="13.2" fill="#fff" font-weight="normal" textLength="33.0" lengthAdjust="spacingAndGlyphs">57.4M</text>
<text x="808.2" y="723.2" font-size="13.2" fill="#777" font-weight="normal" textLength="17.7" lengthAdjust="spacingAndGlyphs">0M</text>
<text x="872.0" y="723.2" font-size="13.2" fill="#777" font-weight="normal" textLength="24.0" lengthAdjust="spacingAndGlyphs">20M</text>
<text x="940.0" y="723.2" font-size="13.2" fill="#777" font-weight="normal" textLength="24.0" lengthAdjust="spacingAndGlyphs">40M</text>
<text x="1007.1" y="723.2" font-size="13.2" fill="#777" font-weight="normal" textLength="23.9" lengthAdjust="spacingAndGlyphs">60M</text>
<text x="1075.1" y="723.2" font-size="13.2" fill="#777" font-weight="normal" textLength="23.6" lengthAdjust="spacingAndGlyphs">80M</text>
<text x="1138.6" y="723.2" font-size="13.2" fill="#777" font-weight="normal" textLength="30.4" lengthAdjust="spacingAndGlyphs">100M</text>
</svg>
</body></html>
